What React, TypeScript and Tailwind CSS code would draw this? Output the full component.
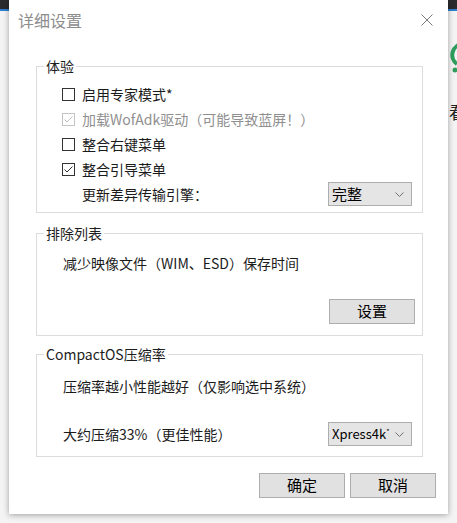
import React from "react";

const FONT = "font-['Noto_Sans_CJK_SC','Noto_Sans',sans-serif]";

const Check: React.FC<{ checked?: boolean; disabled?: boolean }> = ({
  checked,
  disabled
}) => (
  <span
    className={`flex items-center justify-center w-[13px] h-[13px] bg-white border ${
      disabled ? "border-[#c4c4c4]" : "border-[#333333]"
    }`}
  >
    {checked && (
      <svg width="9" height="7" viewBox="0 0 9 7">
        <polyline
          points="0.5,3.5 3,6 8.5,0.5"
          fill="none"
          stroke={disabled ? "#bdbdbd" : "#333333"}
          strokeWidth="1"
        />
      </svg>
    )}
  </span>
);

const Chevron = () => (
  <svg className="shrink-0" width="9" height="5" viewBox="0 0 9 5">
    <polyline points="0.5,0.5 4.5,4.5 8.5,0.5" fill="none" stroke="#707070" strokeWidth="1" />
  </svg>
);

const Select: React.FC<{ value: React.ReactNode; small?: boolean }> = ({
  value,
  small
}) => (
  <div
    className={`flex items-center justify-between gap-[4px] w-[84px] h-[24px] pl-[3px] pr-[7px] bg-[#e5e5e5] border border-[#adadad] text-black ${
      small ? "text-[13px]" : "text-[15px]"
    }`}
  >
    <span className="whitespace-nowrap">{value}</span>
    <Chevron />
  </div>
);

const Button: React.FC<{ label: string }> = ({ label }) => (
  <button className="flex items-center justify-center w-[86px] h-[25px] bg-[#e1e1e1] border border-[#adadad] text-[15px] text-black">
    {label}
  </button>
);

const Group: React.FC<{
  title: string;
  className?: string;
  children: React.ReactNode;
}> = ({ title, className = "", children }) => (
  <fieldset className={`ml-[27px] mr-[25px] border border-[#dcdcdc] ${className}`}>
    <legend className="ml-[7px] px-[2px] text-[14px] leading-[18px] text-[#1e1e1e]">
      {title}
    </legend>
    {children}
  </fieldset>
);

const CheckRow: React.FC<{
  label: string;
  checked?: boolean;
  disabled?: boolean;
}> = ({ label, checked, disabled }) => (
  <div className="flex items-center h-[25px] gap-[7px]">
    <Check checked={checked} disabled={disabled} />
    <span className={disabled ? "text-[#8f8f8f]" : "text-[#1b1b1b]"}>{label}</span>
  </div>
);

export default function App() {
  return (
    <div className={`relative w-[457px] h-[523px] overflow-hidden bg-[#f4f4f4] ${FONT}`}>
      {/* desktop behind the dialog */}
      <div className="h-[9px] bg-[#2b2b2e]" />
      <div className="h-[2px] bg-[#2f7fd0]" />
      <svg
        className="absolute left-[449px] top-[40px]"
        width="24"
        height="36"
        viewBox="0 0 24 36"
      >
        <path d="M14 4 A11 11 0 0 0 8 24" fill="none" stroke="#2f9e5c" strokeWidth="4" />
        <circle cx="6" cy="30" r="2.5" fill="#2f9e5c" />
      </svg>
      <span className="absolute left-[449px] top-[102px] w-[8px] overflow-hidden whitespace-nowrap text-[17px] leading-[20px] text-[#222]">
        看
      </span>

      {/* dialog */}
      <div className="absolute left-[9px] top-0 w-[439px] h-[514px] flex flex-col bg-white shadow-[0_1px_6px_rgba(0,0,0,0.35)] text-[14px] text-[#1b1b1b]">
        <div className="flex items-center justify-between h-[40px] pl-[9px] pr-[15px]">
          <span className="text-[16px] text-[#8d8d8d]">详细设置</span>
          <svg width="12" height="12" viewBox="0 0 12 12">
            <path d="M0.5 0.5 L11.5 11.5 M11.5 0.5 L0.5 11.5" stroke="#7a7a7a" strokeWidth="1" />
          </svg>
        </div>

        <Group title="体验" className="mt-[17px]">
          <div className="flex flex-col pt-[7px] pb-[6px] pl-[25px] pr-[10px]">
            <CheckRow label="启用专家模式*" />
            <CheckRow label="加载WofAdk驱动（可能导致蓝屏！）" checked disabled />
            <CheckRow label="整合右键菜单" />
            <CheckRow label="整合引导菜单" checked />
            <div className="flex items-center justify-between h-[24px] pl-[20px]">
              <span>更新差异传输引擎：</span>
              <Select value="完整" />
            </div>
          </div>
        </Group>

        <Group title="排除列表" className="mt-[11px]">
          <div className="flex flex-col pt-[11px] pb-[11px] pl-[26px] pr-[7px]">
            <span className="leading-[20px]">减少映像文件（WIM、ESD）保存时间</span>
            <div className="flex justify-end mt-[26px]">
              <Button label="设置" />
            </div>
          </div>
        </Group>

        <Group title="CompactOS压缩率" className="mt-[9px]">
          <div className="flex flex-col pt-[13px] pb-[10px] pl-[26px] pr-[10px]">
            <span className="leading-[20px]">压缩率越小性能越好（仅影响选中系统）</span>
            <div className="flex items-center justify-between h-[24px] mt-[26px]">
              <span>大约压缩33%（更佳性能）</span>
              <Select
                small
                value={
                  <>
                    Xpress4k<sup className="text-[7px] -top-[5px]">*</sup>
                  </>
                }
              />
            </div>
          </div>
        </Group>

        <div className="flex justify-end gap-[5px] mt-[16px] pr-[12px]">
          <Button label="确定" />
          <Button label="取消" />
        </div>
      </div>
    </div>
  );
}
